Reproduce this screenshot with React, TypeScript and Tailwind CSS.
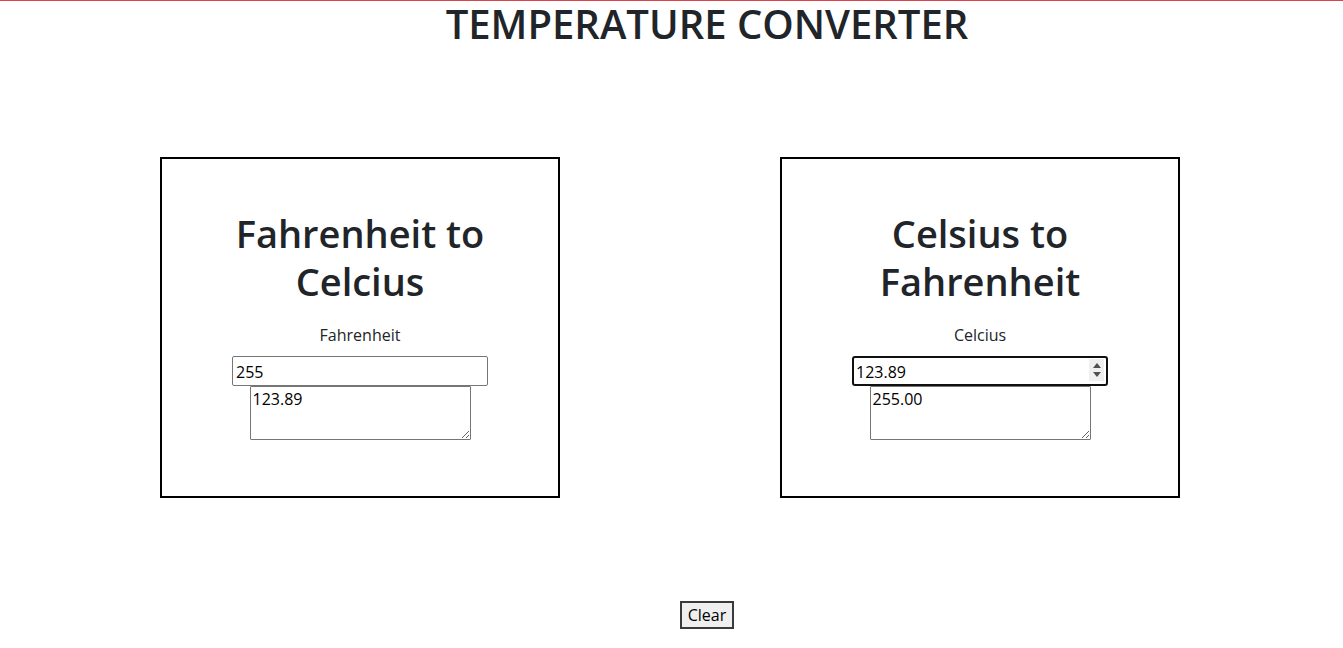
import { useState } from 'react'

interface CardProps {
  title: [string, string]
  label: string
  value: string
  result: string
  focused?: boolean
}

const Spinner = () => (
  <div className="absolute right-[4px] top-[3px] w-[15px] h-[22px] bg-[#efefef] flex flex-col items-center justify-center gap-[4px]">
    <svg width="8" height="5" viewBox="0 0 8 5">
      <path d="M4 0 L8 5 L0 5 Z" fill="#505050" />
    </svg>
    <svg width="8" height="5" viewBox="0 0 8 5">
      <path d="M0 0 L8 0 L4 5 Z" fill="#505050" />
    </svg>
  </div>
)

const ConverterCard = ({ title, label, value, result, focused }: CardProps) => {
  const [val, setVal] = useState(value)
  return (
    <div className="w-[400px] h-[341px] border-2 border-black flex flex-col items-center">
      <h2 className="mt-[50px] text-[38px] leading-[48px] font-semibold text-center text-[#212529]">
        {title[0]}
        <br />
        {title[1]}
      </h2>
      <label className="mt-[18px] text-[16px] leading-[24px] text-[#212529]">{label}</label>
      <div className="relative mt-[9px]">
        <input
          type="text"
          value={val}
          onChange={(e) => setVal(e.target.value)}
          className={
            focused
              ? 'w-[256px] h-[30px] border-2 border-[#101010] rounded-[3px] px-[2px] pt-[1px] text-[16px] text-black outline-none'
              : 'w-[256px] h-[30px] border border-[#767676] rounded-[2px] px-[3px] pt-[1px] text-[16px] text-black outline-none'
          }
        />
        {focused && <Spinner />}
      </div>
      <textarea
        readOnly
        value={result}
        className="w-[221px] h-[54px] border border-[#767676] rounded-[1px] px-[2px] pt-[2px] text-[16px] leading-[20px] text-black outline-none"
      />
    </div>
  )
}

const App = () => {
  return (
    <div className="min-h-screen bg-white border-t border-[#d9434b] font-['Open_Sans',sans-serif]">
      <h1 className="pl-[71px] text-center text-[40px] leading-[46px] font-semibold text-[#212529]">
        TEMPERATURE CONVERTER
      </h1>
      <div className="mt-[110px] pl-[160px] flex gap-[220px]">
        <ConverterCard
          title={['Fahrenheit to', 'Celcius']}
          label="Fahrenheit"
          value="255"
          result="123.89"
        />
        <ConverterCard
          title={['Celsius to', 'Fahrenheit']}
          label="Celcius"
          value="123.89"
          result="255.00"
          focused
        />
      </div>
      <div className="mt-[103px] pl-[71px] flex justify-center">
        <button className="border-2 border-[#3a3a3a] bg-[#efefef] px-[6px] text-[16px] leading-[24px] text-black">
          Clear
        </button>
      </div>
    </div>
  )
}

export default App
